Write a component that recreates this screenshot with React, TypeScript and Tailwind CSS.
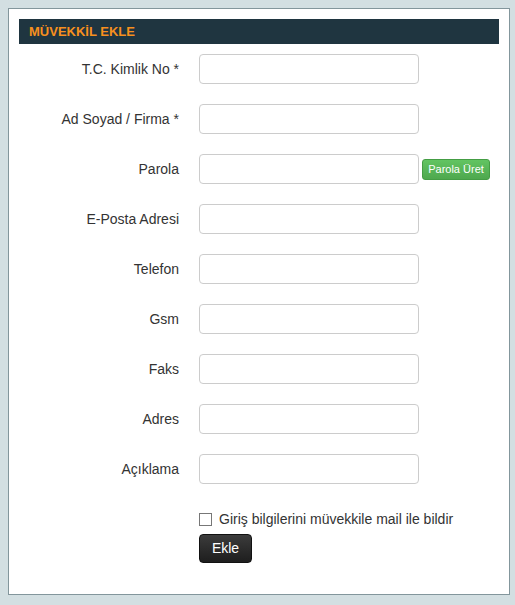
import { useState } from 'react';

const fields = [
  { label: 'T.C. Kimlik No *', name: 'tc' },
  { label: 'Ad Soyad / Firma *', name: 'ad' },
  { label: 'Parola', name: 'parola', extra: true },
  { label: 'E-Posta Adresi', name: 'eposta' },
  { label: 'Telefon', name: 'telefon' },
  { label: 'Gsm', name: 'gsm' },
  { label: 'Faks', name: 'faks' },
  { label: 'Adres', name: 'adres' },
  { label: 'Açıklama', name: 'aciklama' },
];

export default function App() {
  const [notify, setNotify] = useState(false);

  return (
    <div className="min-h-[605px] bg-[#d3dfe2] pt-2 pl-2 pr-[5px] pb-[10px] font-['Liberation_Sans',Arial,sans-serif]">
      <div className="border border-[#83969c] bg-white px-[10px] pt-[10px] h-[587px]">
        {/* Header */}
        <div className="h-[25px] bg-[#1f3540] pl-[10px] flex items-center">
          <h2 className="text-[13px] font-bold text-[#f7901e] leading-none">MÜVEKKİL EKLE</h2>
        </div>

        {/* Form */}
        <div className="pt-[10px] flex flex-col gap-5">
          {fields.map((f) => (
            <div key={f.name} className="flex items-center h-[30px]">
              <label className="w-[180px] shrink-0 text-right text-[14px] text-[#333] pr-5">{f.label}</label>
              <input
                type="text"
                className="w-[220px] h-[30px] rounded-[4px] border border-[#ccc] bg-white px-2 text-[14px] outline-none"
              />
              {f.extra && (
                <button className="ml-[3px] h-[21px] w-[68px] rounded-[3px] border border-[#449d44] bg-gradient-to-b from-[#62c462] to-[#4ea84e] text-[11px] text-white leading-none">
                  Parola Üret
                </button>
              )}
            </div>
          ))}

          {/* Checkbox + submit */}
          <div className="pl-[180px] flex flex-col mt-[7px]">
            <label className="flex items-center gap-[7px] text-[14px] text-[#333] h-[16px]">
              <input
                type="checkbox"
                checked={notify}
                onChange={(e) => setNotify(e.target.checked)}
                className="appearance-none w-[13px] h-[13px] border border-[#777] bg-white m-0 shrink-0"
              />
              Giriş bilgilerini müvekkile mail ile bildir
            </label>
            <button className="mt-[7px] w-[53px] h-[29px] rounded-[4px] bg-gradient-to-b from-[#3c3c3c] to-[#1e1e1e] border border-[#111] text-[14px] text-white">
              Ekle
            </button>
          </div>
        </div>
      </div>
    </div>
  );
}
